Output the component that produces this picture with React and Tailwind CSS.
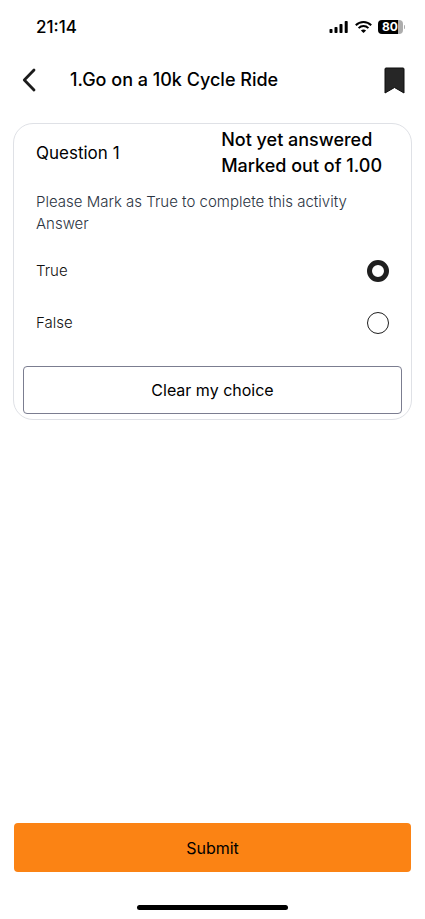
import { useState } from "react";

function StatusBar() {
  return (
    <div className="flex h-[54px] items-center justify-between pl-9 pr-5">
      <span className="text-[17px] leading-6 font-medium">21:14</span>
      <div className="flex items-center gap-[6px]">
        <svg className="h-3 w-5" viewBox="0 0 20 12" fill="currentColor" aria-hidden="true">
          <rect x="0.5" y="8" width="3" height="4" rx="0.8" />
          <rect x="5.5" y="6" width="3" height="6" rx="0.8" />
          <rect x="10.5" y="3" width="3" height="9" rx="0.8" />
          <rect x="15.7" y="0" width="3" height="12" rx="0.8" />
        </svg>
        <svg className="h-3 w-[17px]" viewBox="0 0 17 12" fill="none" stroke="currentColor" strokeWidth="2" aria-hidden="true">
          <path d="M0.8 4.3C5 0 12 0 16.2 4.3" />
          <path d="M3.6 7.1c2.8-2.7 7-2.7 9.8 0" />
          <path d="M8.5 12 5.9 9.4c1.5-1.3 3.7-1.3 5.2 0z" fill="currentColor" stroke="none" />
        </svg>
        <div className="flex items-center gap-px">
          <div className="flex h-[14px] w-[25px] items-center rounded-[4px] bg-linear-to-r from-black from-80% to-[#adadad] to-80% pl-1 text-xs leading-[14px] font-bold text-white">
            80
          </div>
          <div className="h-1 w-px rounded-r bg-[#adadad]" />
        </div>
      </div>
    </div>
  );
}

function Header() {
  return (
    <header className="flex h-[52px] items-center pl-[22px] pr-5">
      <button type="button" aria-label="Back" className="w-12">
        <svg className="h-6 w-[14px]" viewBox="0 0 14 24" fill="none" stroke="#1c1c1c" strokeWidth="2.8" strokeLinecap="round" strokeLinejoin="round" aria-hidden="true">
          <path d="M12 2 2.3 12 12 22" />
        </svg>
      </button>
      <h1 className="flex-1 text-lg leading-6 font-medium">1.Go on a 10k Cycle Ride</h1>
      <button type="button" aria-label="Bookmark">
        <svg className="h-[27px] w-[21px]" viewBox="0 0 21 27" fill="#262626" stroke="#0c0c0c" strokeWidth="1" strokeLinejoin="round" aria-hidden="true">
          <path d="M2 1h17a1 1 0 0 1 1 1v24l-9.5-5.5L1 26V2a1 1 0 0 1 1-1z" />
        </svg>
      </button>
    </header>
  );
}

function Choice({ label, value, selected, onSelect }) {
  return (
    <label className="flex h-[52px] items-center justify-between px-[22px] text-[15px] leading-[22px] font-light text-[#111111]">
      {label}
      <input
        type="radio"
        name="answer"
        value={value}
        checked={selected === value}
        onChange={() => onSelect(value)}
        className="size-[22px] appearance-none rounded-full border border-[#1f1f1f] checked:border-[5px]"
      />
    </label>
  );
}

export default function App() {
  const [answer, setAnswer] = useState("true");

  return (
    <div className="flex min-h-screen flex-col bg-white font-['Inter',sans-serif] text-black">
      <StatusBar />
      <Header />
      <main className="flex flex-1 flex-col px-[13px] pt-[17px]">
        <section className="rounded-[20px] border border-[#dfe1e6] pb-[5px]">
          <div className="flex items-start justify-between pl-[22px] pr-[29px] pt-[3px]">
            <h2 className="pt-[14px] text-[17px] leading-6">Question 1</h2>
            <p className="text-lg leading-[26px] font-medium">
              Not yet answered
              <br />
              Marked out of 1.00
            </p>
          </div>
          <p className="px-[22px] pt-3 text-[15px] leading-[22px] font-light text-[#2b3442]">
            Please Mark as True to complete this activity
            <br />
            Answer
          </p>
          <fieldset aria-label="Answer" className="pt-[10px]">
            <Choice label="True" value="true" selected={answer} onSelect={setAnswer} />
            <Choice label="False" value="false" selected={answer} onSelect={setAnswer} />
          </fieldset>
          <div className="px-[9px] pt-[17px]">
            <button
              type="button"
              onClick={() => setAnswer("")}
              className="h-12 w-full rounded-[4px] border border-[#7b7d90] text-base"
            >
              Clear my choice
            </button>
          </div>
        </section>
      </main>
      <footer className="flex flex-col items-center px-[14px] pb-[9px]">
        <button type="button" className="h-[49px] w-full rounded-[4px] bg-[#fb8314] text-base">
          Submit
        </button>
        <div className="mt-[33px] h-[5px] w-[151px] rounded-full bg-black" />
      </footer>
    </div>
  );
}
